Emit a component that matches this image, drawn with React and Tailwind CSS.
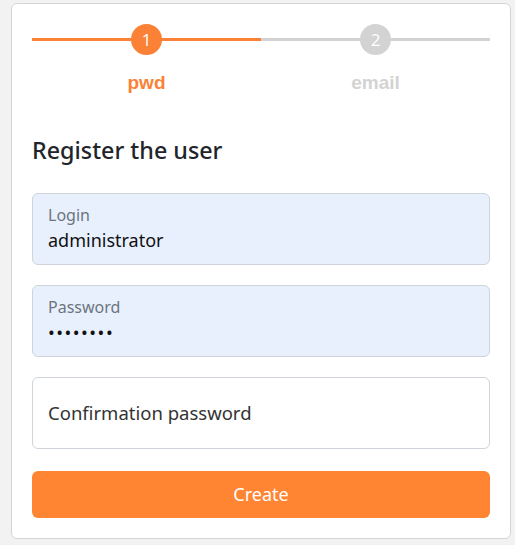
import React from 'react';

const steps = [
  { n: 1, label: 'pwd', active: true },
  { n: 2, label: 'email', active: false },
];

function Step({ step }) {
  const line = step.active ? 'bg-[#fb8137]' : 'bg-[#d3d3d3]';
  return (
    <div className="flex-1 flex flex-col items-center">
      <div className="relative w-full h-[31px] flex items-center justify-center">
        <div className={`absolute left-0 right-0 top-[14px] h-[3px] ${line}`}></div>
        <div
          className={`relative w-[31px] h-[31px] rounded-full flex items-center justify-center text-white text-[17px] ${
            step.active ? 'bg-[#fb8137]' : 'bg-[#d3d3d3]'
          }`}
          style={{ fontFamily: 'Open Sans, sans-serif' }}
        >
          {step.n}
        </div>
      </div>
      <div
        className={`mt-[17px] text-[19px] font-bold leading-[22px] ${
          step.active ? 'text-[#fb8137]' : 'text-[#d3d3d3]'
        }`}
        style={{ fontFamily: '"Liberation Sans", Arial, sans-serif' }}
      >
        {step.label}
      </div>
    </div>
  );
}

function Field({ label, value, filled, password }) {
  return (
    <div
      className={`h-[72px] rounded-[6px] border border-[#ced4da] px-[15px] flex flex-col justify-center ${
        filled ? 'bg-[#e8f0fe]' : 'bg-white'
      }`}
    >
      {filled ? (
        <>
          <span className="text-[16px] leading-[20px] text-[#6c757d]">{label}</span>
          <span
            className={`mt-[2px] leading-[26px] text-[#111] ${
              password ? 'text-[18px] tracking-[1.5px]' : 'text-[18px]'
            }`}
          >
            {password ? '••••••••' : value}
          </span>
        </>
      ) : (
        <span className="text-[18.5px] text-[#333]">{label}</span>
      )}
    </div>
  );
}

export default function App() {
  return (
    <div
      className="bg-[#f2f2f2] h-[545px] pl-[11px] pt-[3px]"
      style={{ fontFamily: '"Noto Sans", "Open Sans", sans-serif' }}
    >
      <div className="w-[500px] h-[536px] bg-white border border-[#d5d5d5] rounded-[6px] px-[20px] pt-[20px]">
        <div className="flex">
          {steps.map((s) => (
            <Step key={s.n} step={s} />
          ))}
        </div>

        <h2 className="mt-[40px] text-[23.3px] leading-[32px] font-medium text-[#212529]">Register the user</h2>

        <div className="mt-[27px] flex flex-col gap-[20px]">
          <Field label="Login" value="administrator" filled />
          <Field label="Password" filled password />
          <Field label="Confirmation password" />
        </div>

        <button className="mt-[22px] w-full h-[47px] rounded-[6px] bg-[#ff8533] text-white text-[18px]">
          Create
        </button>
      </div>
    </div>
  );
}
